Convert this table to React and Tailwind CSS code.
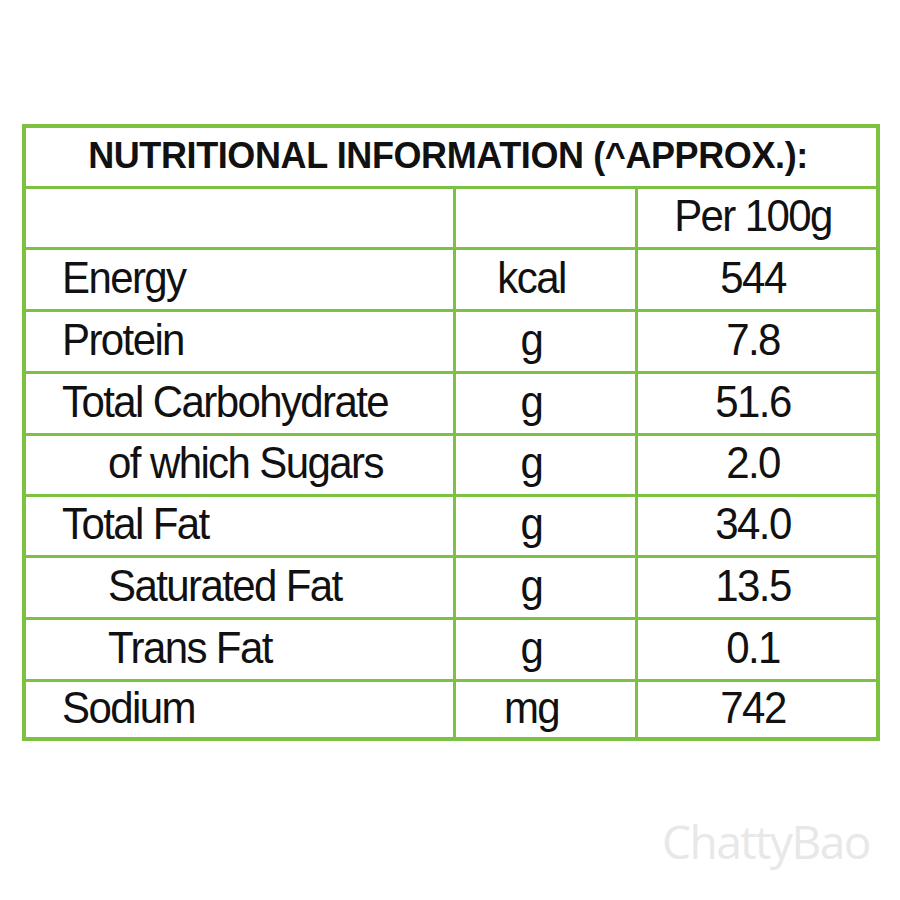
import React from "react";

const rows = [
  { label: "", unit: "", value: "Per 100g", indent: false, h: "h-[61px]" },
  { label: "Energy", unit: "kcal", value: "544", indent: false, h: "h-[62px]" },
  { label: "Protein", unit: "g", value: "7.8", indent: false, h: "h-[62px]" },
  { label: "Total Carbohydrate", unit: "g", value: "51.6", indent: false, h: "h-[62px]" },
  { label: "of which Sugars", unit: "g", value: "2.0", indent: true, h: "h-[61px]" },
  { label: "Total Fat", unit: "g", value: "34.0", indent: false, h: "h-[61px]" },
  { label: "Saturated Fat", unit: "g", value: "13.5", indent: true, h: "h-[62px]" },
  { label: "Trans Fat", unit: "g", value: "0.1", indent: true, h: "h-[62px]" },
  { label: "Sodium", unit: "mg", value: "742", indent: false, h: "h-[58px]" },
];

export default function App() {
  return (
    <div
      className="w-[900px] h-[900px] bg-white flex flex-col"
      style={{ fontFamily: '"Liberation Sans", Arial, sans-serif' }}
    >
      <div className="ml-[22px] mt-[124px] w-[858px] border-4 border-[#7cc142] flex flex-col text-[#111]">
        <div className="h-[58px] flex items-center justify-center text-[36px] font-bold tracking-[-0.4px] pb-[2px] pr-[6px]">
          NUTRITIONAL INFORMATION (^APPROX.):
        </div>
        {rows.map((r, i) => (
          <div
            key={i}
            className={`flex border-t-[3px] border-[#7cc142] ${r.h} text-[42px] tracking-[-1.6px] leading-none`}
          >
            <div
              className={`w-[427px] flex items-center pb-[4px] ${
                r.indent ? "pl-[82px]" : "pl-[36px]"
              }`}
            >
              <span className="inline-block origin-left scale-y-[1.06]">{r.label}</span>
            </div>
            <div className="w-[182px] border-l-[3px] border-[#7cc142] flex items-center justify-center pr-[28px] pb-[4px]">
              <span className="inline-block scale-y-[1.06]">{r.unit}</span>
            </div>
            <div className="flex-1 border-l-[3px] border-[#7cc142] flex items-center justify-center pr-[8px] pb-[4px]">
              <span className="inline-block scale-y-[1.06]">{r.value}</span>
            </div>
          </div>
        ))}
      </div>
      <div className="flex justify-end pr-[30px] mt-[66px]">
        <span
          className="text-[46px] text-[#e8e8e8] tracking-[-1.5px]"
          style={{ fontFamily: '"Open Sans", sans-serif' }}
        >
          ChattyBao
        </span>
      </div>
    </div>
  );
}
